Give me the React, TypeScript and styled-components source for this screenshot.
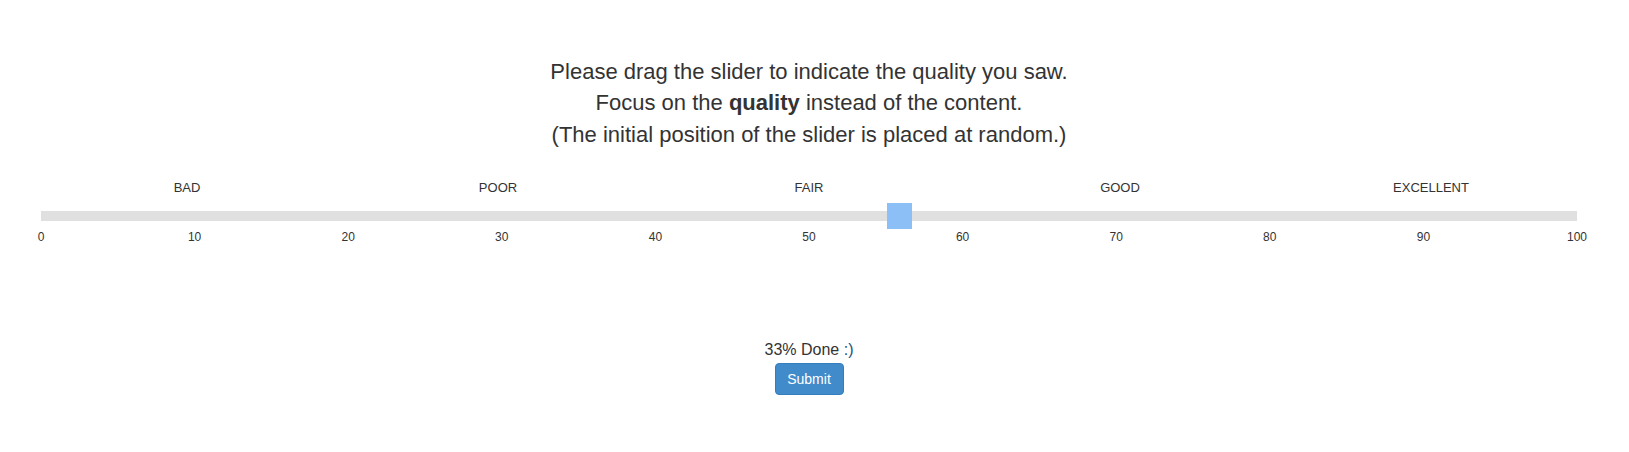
import styled, { createGlobalStyle } from "styled-components";

const GlobalStyle = createGlobalStyle`
  body {
    margin: 0;
    background: #fff;
    color: #333;
    font-family: "Liberation Sans", Arial, sans-serif;
  }
`;

const labels = ["BAD", "POOR", "FAIR", "GOOD", "EXCELLENT"];
const ticks = [0, 10, 20, 30, 40, 50, 60, 70, 80, 90, 100];
const value = 55.9;

const App = () => {
  return (
    <Page>
      <GlobalStyle />
      <Instructions>
        Please drag the slider to indicate the quality you saw.
        <br />
        Focus on the <strong>quality</strong> instead of the content.
        <br />
        (The initial position of the slider is placed at random.)
      </Instructions>
      <LabelRow>
        {labels.map((l) => (
          <Label key={l}>{l}</Label>
        ))}
      </LabelRow>
      <SliderArea>
        <Track>
          <Thumb style={{ left: `${value}%` }} />
        </Track>
        <TickRow>
          {ticks.map((t) => (
            <Tick key={t} style={{ left: `${t}%` }}>
              {t}
            </Tick>
          ))}
        </TickRow>
      </SliderArea>
      <Footer>
        <Progress>
          33% Done <Smile>:)</Smile>
        </Progress>
        <SubmitButton type="button">Submit</SubmitButton>
      </Footer>
    </Page>
  );
};

export default App;

const Page = styled.div`
  width: 1618px;
  padding-top: 56px;
  display: flex;
  flex-direction: column;
  align-items: stretch;
`;

const Instructions = styled.p`
  margin: 0;
  text-align: center;
  font-size: 22px;
  line-height: 31.3px;
  color: #333;

  strong {
    font-weight: bold;
  }
`;

const LabelRow = styled.div`
  display: grid;
  grid-template-columns: repeat(5, 1fr);
  margin: 29px 31.5px 0;
`;

const Label = styled.div`
  text-align: center;
  font-size: 13px;
  line-height: 17px;
  color: #333;
`;

const SliderArea = styled.div`
  margin: 7.5px 41px 0;
`;

const Track = styled.div`
  position: relative;
  height: 10px;
  margin: 8px 0;
  background: #e0e0e0;
`;

const Thumb = styled.div`
  position: absolute;
  top: -8px;
  width: 25px;
  height: 26px;
  margin-left: -12.5px;
  background: #8cbff6;
`;

const TickRow = styled.div`
  position: relative;
  height: 17px;
`;

const Tick = styled.span`
  position: absolute;
  top: 0;
  transform: translateX(-50%);
  font-size: 12px;
  line-height: 17px;
  color: #333;
`;

const Footer = styled.div`
  margin-top: 92px;
  display: flex;
  flex-direction: column;
  align-items: center;
`;

const Progress = styled.div`
  font-size: 16px;
  line-height: 23px;
  color: #333;
`;

const Smile = styled.span`
  color: #23527c;
`;

const SubmitButton = styled.button`
  margin-top: 1.5px;
  width: 69px;
  height: 32px;
  padding: 0;
  font-family: "Liberation Sans", Arial, sans-serif;
  font-size: 14px;
  color: #fff;
  background: #428bca;
  border: 1px solid #357ebd;
  border-radius: 4px;
  cursor: pointer;
`;
